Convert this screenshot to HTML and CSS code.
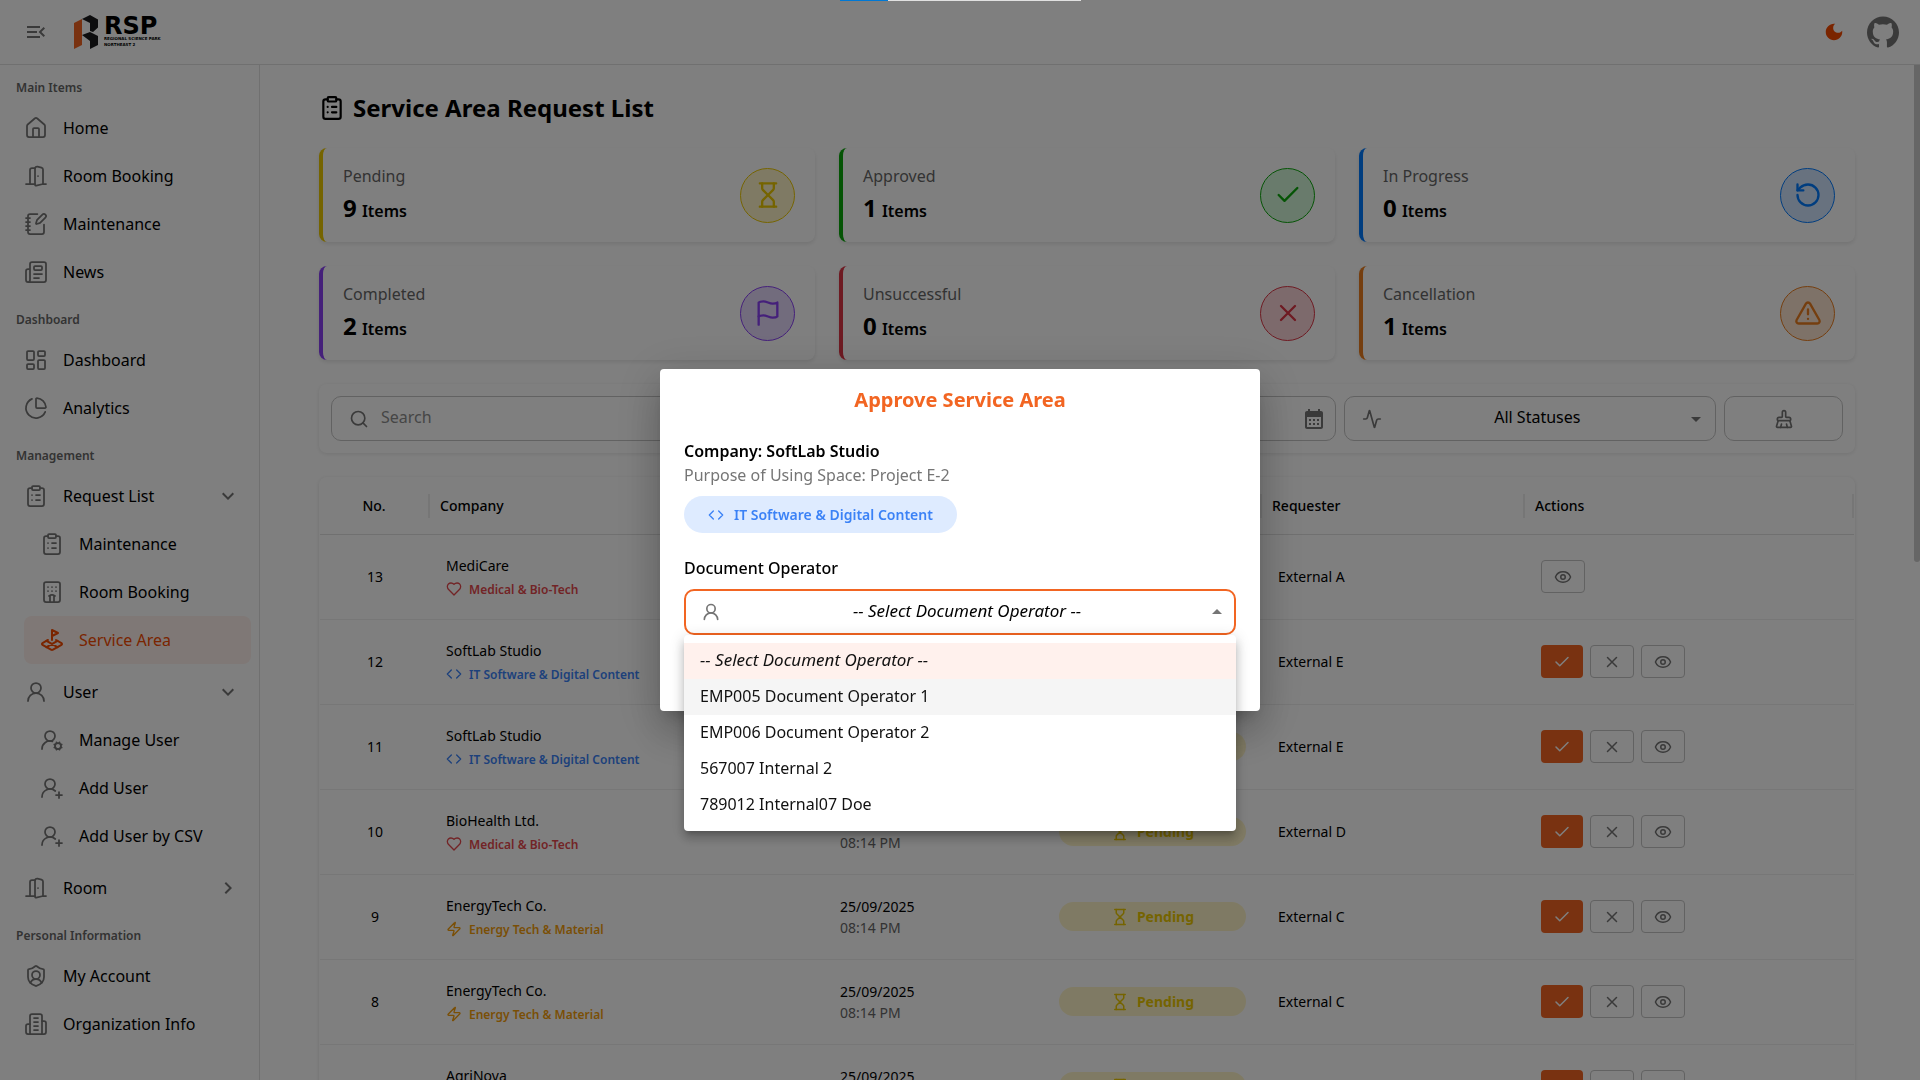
FILE: index.html
```html
<!DOCTYPE html>
<html lang="en">
<head>
<meta charset="utf-8">
<meta name="viewport" content="width=device-width, initial-scale=1">
<title>Service Area Request List</title>
<link rel="stylesheet" href="styles.css">
</head>
<body>
<svg class="sprite" aria-hidden="true">
  <symbol id="home" viewBox="0 0 24 24"><path d="M15 21v-8a1 1 0 0 0-1-1h-4a1 1 0 0 0-1 1v8"/><path d="M3 10a2 2 0 0 1 .709-1.528l7-6a2 2 0 0 1 2.582 0l7 6A2 2 0 0 1 21 10v9a2 2 0 0 1-2 2H5a2 2 0 0 1-2-2z"/></symbol>
  <symbol id="door" viewBox="0 0 24 24"><path d="M11 20H2"/><path d="M11 4.562v16.157a1 1 0 0 0 1.242.97L19 20V5.562a2 2 0 0 0-1.515-1.94l-4-1A2 2 0 0 0 11 4.561z"/><path d="M11 4H8a2 2 0 0 0-2 2v14"/><path d="M14 12h.01"/><path d="M22 20h-3"/></symbol>
  <symbol id="notebook" viewBox="0 0 24 24"><path d="M13.4 2H6a2 2 0 0 0-2 2v16a2 2 0 0 0 2 2h12a2 2 0 0 0 2-2v-7.4"/><path d="M2 6h4M2 10h4M2 14h4M2 18h4"/><path d="M21.378 5.626a1 1 0 1 0-3.004-3.004l-5.01 5.012a2 2 0 0 0-.506.854l-.837 2.87a.5.5 0 0 0 .62.62l2.87-.837a2 2 0 0 0 .854-.506z"/></symbol>
  <symbol id="news" viewBox="0 0 24 24"><path d="M15 18h-5M18 14h-8"/><path d="M4 22h16a2 2 0 0 0 2-2V4a2 2 0 0 0-2-2H8a2 2 0 0 0-2 2v16a2 2 0 0 1-4 0v-9a2 2 0 0 1 2-2h2"/><rect width="8" height="4" x="10" y="6" rx="1"/></symbol>
  <symbol id="dash" viewBox="0 0 24 24"><rect width="7" height="9" x="3" y="3" rx="1"/><rect width="7" height="5" x="14" y="3" rx="1"/><rect width="7" height="9" x="14" y="12" rx="1"/><rect width="7" height="5" x="3" y="16" rx="1"/></symbol>
  <symbol id="pie" viewBox="0 0 24 24"><path d="M21 12c.552 0 1.005-.449.95-.998a10 10 0 0 0-8.953-8.951c-.55-.055-.998.398-.998.95v8a1 1 0 0 0 1 1z"/><path d="M21.21 15.89A10 10 0 1 1 8 2.83"/></symbol>
  <symbol id="clip" viewBox="0 0 24 24"><rect width="8" height="4" x="8" y="2" rx="1"/><path d="M16 4h2a2 2 0 0 1 2 2v14a2 2 0 0 1-2 2H6a2 2 0 0 1-2-2V6a2 2 0 0 1 2-2h2"/><path d="M12 11h4M12 16h4M8 11h.01M8 16h.01"/></symbol>
  <symbol id="hotel" viewBox="0 0 24 24"><path d="M10 22v-6.57M12 11h.01M12 7h.01M14 15.43V22M15 16a5 5 0 0 0-6 0M16 11h.01M16 7h.01M8 11h.01M8 7h.01"/><rect x="4" y="2" width="16" height="20" rx="2"/></symbol>
  <symbol id="plot" viewBox="0 0 24 24"><path d="m12 8 6-3-6-3v10"/><path d="m8 11.99-5.5 3.14a1 1 0 0 0 0 1.74l8.5 4.86a2 2 0 0 0 2 0l8.5-4.86a1 1 0 0 0 0-1.74L16 12"/><path d="m6.49 12.85 11.02 6.3M17.51 12.85 6.5 19.15"/></symbol>
  <symbol id="user" viewBox="0 0 24 24"><circle cx="12" cy="8" r="5"/><path d="M20 21a8 8 0 0 0-16 0"/></symbol>
  <symbol id="usercog" viewBox="0 0 24 24"><path d="m14.305 19.53.923-.382M15.228 16.852l-.923-.383M16.852 15.228l-.383-.923M16.852 20.772l-.383.924M19.148 15.228l.383-.923M19.53 21.696l-.382-.924M20.772 16.852l.924-.383M20.772 19.148l.924.383"/><path d="M2 21a8 8 0 0 1 10.434-7.62"/><circle cx="10" cy="8" r="5"/><circle cx="18" cy="18" r="3"/></symbol>
  <symbol id="userplus" viewBox="0 0 24 24"><path d="M2 21a8 8 0 0 1 13.292-6"/><circle cx="10" cy="8" r="5"/><path d="M19 16v6M22 19h-6"/></symbol>
  <symbol id="shield" viewBox="0 0 24 24"><path d="M20 13c0 5-3.5 7.5-7.66 8.95a1 1 0 0 1-.67-.01C7.5 20.5 4 18 4 13V6a1 1 0 0 1 1-1c2 0 4.5-1.2 6.24-2.72a1.17 1.17 0 0 1 1.52 0C14.51 3.81 17 5 19 5a1 1 0 0 1 1 1z"/><path d="M6.376 18.91a6 6 0 0 1 11.249.003"/><circle cx="12" cy="11" r="4"/></symbol>
  <symbol id="org" viewBox="0 0 24 24"><path d="M6 22V4a2 2 0 0 1 2-2h8a2 2 0 0 1 2 2v18Z"/><path d="M6 12H4a2 2 0 0 0-2 2v6a2 2 0 0 0 2 2h2M18 9h2a2 2 0 0 1 2 2v9a2 2 0 0 1-2 2h-2M10 6h4M10 10h4M10 14h4M10 18h4"/></symbol>
  <symbol id="hourglass" viewBox="0 0 24 24"><path d="M5 22h14M5 2h14"/><path d="M17 22v-4.172a2 2 0 0 0-.586-1.414L12 12l-4.414 4.414A2 2 0 0 0 7 17.828V22"/><path d="M7 2v4.172a2 2 0 0 0 .586 1.414L12 12l4.414-4.414A2 2 0 0 0 17 6.172V2"/></symbol>
  <symbol id="check" viewBox="0 0 24 24"><path d="M20 6 9 17l-5-5"/></symbol>
  <symbol id="x" viewBox="0 0 24 24"><path d="M18 6 6 18M6 6l12 12"/></symbol>
  <symbol id="rotate" viewBox="0 0 24 24"><path d="M3 12a9 9 0 1 0 9-9 9.75 9.75 0 0 0-6.74 2.74L3 8"/><path d="M3 3v5h5"/></symbol>
  <symbol id="flag" viewBox="0 0 24 24"><path d="M4 15s1-1 4-1 5 2 8 2 4-1 4-1V3s-1 1-4 1-5-2-8-2-4 1-4 1z"/><path d="M4 22v-7"/></symbol>
  <symbol id="warn" viewBox="0 0 24 24"><path d="m21.73 18-8-14a2 2 0 0 0-3.48 0l-8 14A2 2 0 0 0 4 21h16a2 2 0 0 0 1.73-3"/><path d="M12 9v4M12 17h.01"/></symbol>
  <symbol id="search" viewBox="0 0 24 24"><circle cx="11" cy="11" r="8"/><path d="m21 21-4.3-4.3"/></symbol>
  <symbol id="activity" viewBox="0 0 24 24"><path d="M22 12h-2.48a2 2 0 0 0-1.93 1.46l-2.35 8.36a.25.25 0 0 1-.48 0L9.24 2.18a.25.25 0 0 0-.48 0l-2.35 8.36A2 2 0 0 1 4.49 12H2"/></symbol>
  <symbol id="broom" viewBox="0 0 24 24"><path d="m16 22-1-4"/><path d="M19 14a1 1 0 0 0 1-1v-1a2 2 0 0 0-2-2h-3a1 1 0 0 1-1-1V4a2 2 0 0 0-4 0v5a1 1 0 0 1-1 1H6a2 2 0 0 0-2 2v1a1 1 0 0 0 1 1"/><path d="M19 14H5l-1.973 6.767A1 1 0 0 0 4 22h16a1 1 0 0 0 .973-1.233z"/><path d="m8 22 1-4"/></symbol>
  <symbol id="heart" viewBox="0 0 24 24"><path d="M19 14c1.49-1.46 3-3.21 3-5.5A5.5 5.5 0 0 0 16.5 3c-1.76 0-3 .5-4.5 2-1.5-1.5-2.74-2-4.5-2A5.5 5.5 0 0 0 2 8.5c0 2.3 1.5 4.05 3 5.5l7 7Z"/></symbol>
  <symbol id="code" viewBox="0 0 24 24"><path d="m16 18 6-6-6-6M8 6l-6 6 6 6"/></symbol>
  <symbol id="zap" viewBox="0 0 24 24"><path d="M4 14a1 1 0 0 1-.78-1.63l9.9-10.2a.5.5 0 0 1 .86.46l-1.92 6.02A1 1 0 0 0 13 10h7a1 1 0 0 1 .78 1.63l-9.9 10.2a.5.5 0 0 1-.86-.46l1.92-6.02A1 1 0 0 0 11 14z"/></symbol>
  <symbol id="sprout" viewBox="0 0 24 24"><path d="M7 20h10M10 20c5.5-2.5.8-6.4 3-10"/><path d="M9.5 9.4c1.1.8 1.8 2.2 2.3 3.7-2 .4-3.5.4-4.8-.3-1.2-.6-2.3-1.9-3-4.2 2.8-.5 4.4 0 5.5.8z"/></symbol>
  <symbol id="eye" viewBox="0 0 24 24"><path d="M2.062 12.348a1 1 0 0 1 0-.696 10.75 10.75 0 0 1 19.876 0 1 1 0 0 1 0 .696 10.75 10.75 0 0 1-19.876 0"/><circle cx="12" cy="12" r="3"/></symbol>
  <symbol id="menu" viewBox="0 0 24 24"><path d="M3 18h13v-2H3v2zm0-5h10v-2H3v2zm0-7v2h13V6H3zm18 9.59L17.42 12 21 8.41 19.59 7l-5 5 5 5L21 15.59z"/></symbol>
  <symbol id="moon" viewBox="0 0 24 24"><path d="M12 3c-4.97 0-9 4.03-9 9s4.03 9 9 9 9-4.03 9-9c0-.46-.04-.92-.1-1.36-.98 1.37-2.58 2.26-4.4 2.26-2.98 0-5.4-2.42-5.4-5.4 0-1.81.89-3.42 2.26-4.4-.44-.06-.9-.1-1.36-.1z"/></symbol>
  <symbol id="github" viewBox="0 0 24 24"><path d="M12 .297c-6.63 0-12 5.373-12 12 0 5.303 3.438 9.8 8.205 11.385.6.113.82-.258.82-.577 0-.285-.01-1.04-.015-2.04-3.338.724-4.042-1.61-4.042-1.61C4.422 18.07 3.633 17.7 3.633 17.7c-1.087-.744.084-.729.084-.729 1.205.084 1.838 1.236 1.838 1.236 1.07 1.835 2.809 1.305 3.495.998.108-.776.417-1.305.76-1.605-2.665-.3-5.466-1.332-5.466-5.93 0-1.31.465-2.38 1.235-3.22-.135-.303-.54-1.523.105-3.176 0 0 1.005-.322 3.3 1.23.96-.267 1.98-.399 3-.405 1.02.006 2.04.138 3 .405 2.28-1.552 3.285-1.23 3.285-1.23.645 1.653.24 2.873.12 3.176.765.84 1.23 1.91 1.23 3.22 0 4.61-2.805 5.625-5.475 5.92.42.36.81 1.096.81 2.22 0 1.606-.015 2.896-.015 3.286 0 .315.21.69.825.57C20.565 22.092 24 17.592 24 12.297c0-6.627-5.373-12-12-12"/></symbol>
  <symbol id="down" viewBox="0 0 24 24"><path d="M16.59 8.59 12 13.17 7.41 8.59 6 10l6 6 6-6z"/></symbol>
  <symbol id="right" viewBox="0 0 24 24"><path d="M10 6 8.59 7.41 13.17 12l-4.58 4.59L10 18l6-6z"/></symbol>
  <symbol id="caret" viewBox="0 0 24 24"><path d="m7 10 5 5 5-5z"/></symbol>
  <symbol id="caretup" viewBox="0 0 24 24"><path d="m7 14 5-5 5 5z"/></symbol>
  <symbol id="calendar" viewBox="0 0 24 24"><path d="M19 4h-1V2h-2v2H8V2H6v2H5c-1.11 0-1.99.9-1.99 2L3 20c0 1.1.89 2 2 2h14c1.1 0 2-.9 2-2V6c0-1.1-.9-2-2-2zm0 16H5V10h14v10zM9 14H7v-2h2v2zm4 0h-2v-2h2v2zm4 0h-2v-2h2v2zm-8 4H7v-2h2v2zm4 0h-2v-2h2v2zm4 0h-2v-2h2v2z"/></symbol>
</svg>

<div class="app">
  <header class="topbar">
    <button class="icon-button" type="button" aria-label="Collapse menu"><svg class="solid s24"><use href="#menu"/></svg></button>
    <a class="logo" href="#" aria-label="RSP home">
      <svg class="logo-mark" viewBox="0 0 24 34"><path fill="#f26522" d="M0 8 8 4v26l-8 4z"/><path fill="#1a1a1c" d="m8 4 8-4 8 4.500v8L19 17l-3-1V8z"/><path fill="#1a1a1c" d="m8 20 8-3 8 4v9l-8 4v-8z"/></svg>
      <span class="logo-text"><span class="logo-name">RSP</span><span class="logo-sub">REGIONAL SCIENCE PARK</span><span class="logo-sub">NORTHEAST 2</span></span>
    </a>
    <div class="topbar-actions">
      <button class="icon-button moon" type="button" aria-label="Dark mode"><svg class="solid"><use href="#moon"/></svg></button>
      <a class="icon-button" href="#" aria-label="GitHub"><svg class="solid s32"><use href="#github"/></svg></a>
    </div>
  </header>

  <div class="layout">
    <nav class="sidebar" aria-label="Main">
      <h2 class="nav-title">Main Items</h2>
      <ul class="nav-list">
        <li><a class="nav-item" href="#"><svg class="line s24"><use href="#home"/></svg>Home</a></li>
        <li><a class="nav-item" href="#"><svg class="line s24"><use href="#door"/></svg>Room Booking</a></li>
        <li><a class="nav-item" href="#"><svg class="line s24"><use href="#notebook"/></svg>Maintenance</a></li>
        <li><a class="nav-item" href="#"><svg class="line s24"><use href="#news"/></svg>News</a></li>
      </ul>
      <h2 class="nav-title">Dashboard</h2>
      <ul class="nav-list">
        <li><a class="nav-item" href="#"><svg class="line s24"><use href="#dash"/></svg>Dashboard</a></li>
        <li><a class="nav-item" href="#"><svg class="line s24"><use href="#pie"/></svg>Analytics</a></li>
      </ul>
      <h2 class="nav-title">Management</h2>
      <ul class="nav-list">
        <li><a class="nav-item" href="#"><svg class="line s24"><use href="#clip"/></svg>Request List<svg class="solid s24 chevron"><use href="#down"/></svg></a>
          <ul class="nav-sub">
            <li><a class="nav-item" href="#"><svg class="line s24"><use href="#clip"/></svg>Maintenance</a></li>
            <li><a class="nav-item" href="#"><svg class="line s24"><use href="#hotel"/></svg>Room Booking</a></li>
            <li><a class="nav-item active" href="#"><svg class="line s24"><use href="#plot"/></svg>Service Area</a></li>
          </ul>
        </li>
        <li><a class="nav-item" href="#"><svg class="line s24"><use href="#user"/></svg>User<svg class="solid s24 chevron"><use href="#down"/></svg></a>
          <ul class="nav-sub">
            <li><a class="nav-item" href="#"><svg class="line s24"><use href="#usercog"/></svg>Manage User</a></li>
            <li><a class="nav-item" href="#"><svg class="line s24"><use href="#userplus"/></svg>Add User</a></li>
            <li><a class="nav-item" href="#"><svg class="line s24"><use href="#userplus"/></svg>Add User by CSV</a></li>
          </ul>
        </li>
        <li><a class="nav-item" href="#"><svg class="line s24"><use href="#door"/></svg>Room<svg class="solid s24 chevron"><use href="#right"/></svg></a></li>
      </ul>
      <h2 class="nav-title">Personal Information</h2>
      <ul class="nav-list">
        <li><a class="nav-item" href="#"><svg class="line s24"><use href="#shield"/></svg>My Account</a></li>
        <li><a class="nav-item" href="#"><svg class="line s24"><use href="#org"/></svg>Organization Info</a></li>
      </ul>
    </nav>

    <main class="main">
      <div class="container">
        <h1 class="page-title"><svg class="line s26"><use href="#clip"/></svg>Service Area Request List</h1>

        <section class="stats" aria-label="Summary">
          <article class="stat yellow"><div><p class="stat-label">Pending</p><p class="stat-value"><strong>9</strong> Items</p></div><span class="stat-icon"><svg class="line s28"><use href="#hourglass"/></svg></span></article>
          <article class="stat green"><div><p class="stat-label">Approved</p><p class="stat-value"><strong>1</strong> Items</p></div><span class="stat-icon"><svg class="line s28"><use href="#check"/></svg></span></article>
          <article class="stat blue"><div><p class="stat-label">In Progress</p><p class="stat-value"><strong>0</strong> Items</p></div><span class="stat-icon"><svg class="line s28"><use href="#rotate"/></svg></span></article>
          <article class="stat purple"><div><p class="stat-label">Completed</p><p class="stat-value"><strong>2</strong> Items</p></div><span class="stat-icon"><svg class="line s28"><use href="#flag"/></svg></span></article>
          <article class="stat red"><div><p class="stat-label">Unsuccessful</p><p class="stat-value"><strong>0</strong> Items</p></div><span class="stat-icon"><svg class="line s28"><use href="#x"/></svg></span></article>
          <article class="stat orange"><div><p class="stat-label">Cancellation</p><p class="stat-value"><strong>1</strong> Items</p></div><span class="stat-icon"><svg class="line s28"><use href="#warn"/></svg></span></article>
        </section>

        <form class="filters">
          <label class="field span5"><svg class="line s20"><use href="#search"/></svg><input type="text" placeholder="Search" aria-label="Search"></label>
          <label class="field date span3"><input type="text" aria-label="Date"><svg class="solid s24"><use href="#calendar"/></svg></label>
          <label class="field span3"><svg class="line s20"><use href="#activity"/></svg><select aria-label="Status"><option>All Statuses</option></select><svg class="solid s24 caret"><use href="#caret"/></svg></label>
          <button class="field clear" type="button" aria-label="Clear filters"><svg class="line s20"><use href="#broom"/></svg></button>
        </form>

        <section class="grid">
          <table>
            <colgroup><col class="c-no"><col class="c-company"><col class="c-date"><col class="c-status"><col class="c-requester"><col class="c-actions"></colgroup>
            <thead>
              <tr><th class="center"><div>No.</div></th><th><div>Company</div></th><th><div>Date</div></th><th><div>Status</div></th><th><div>Requester</div></th><th><div>Actions</div></th></tr>
            </thead>
            <tbody>
              <tr><td class="center">13</td><td class="company">MediCare<span class="tag medical"><svg class="line s16"><use href="#heart"/></svg>Medical &amp; Bio-Tech</span></td><td>25/09/2025<span class="time">08:14 PM</span></td><td></td><td>External A</td>
                <td><div class="actions"><button class="act" type="button" aria-label="View"><svg class="line s18"><use href="#eye"/></svg></button></div></td></tr>
              <tr><td class="center">12</td><td class="company">SoftLab Studio<span class="tag software"><svg class="line s16"><use href="#code"/></svg>IT Software &amp; Digital Content</span></td><td>25/09/2025<span class="time">08:14 PM</span></td><td><span class="pill"><svg class="line s18"><use href="#hourglass"/></svg>Pending</span></td><td>External E</td>
                <td><div class="actions"><button class="act approve" type="button" aria-label="Approve"><svg class="line s18"><use href="#check"/></svg></button><button class="act" type="button" aria-label="Reject"><svg class="line s18"><use href="#x"/></svg></button><button class="act" type="button" aria-label="View"><svg class="line s18"><use href="#eye"/></svg></button></div></td></tr>
              <tr><td class="center">11</td><td class="company">SoftLab Studio<span class="tag software"><svg class="line s16"><use href="#code"/></svg>IT Software &amp; Digital Content</span></td><td>25/09/2025<span class="time">08:14 PM</span></td><td><span class="pill"><svg class="line s18"><use href="#hourglass"/></svg>Pending</span></td><td>External E</td>
                <td><div class="actions"><button class="act approve" type="button" aria-label="Approve"><svg class="line s18"><use href="#check"/></svg></button><button class="act" type="button" aria-label="Reject"><svg class="line s18"><use href="#x"/></svg></button><button class="act" type="button" aria-label="View"><svg class="line s18"><use href="#eye"/></svg></button></div></td></tr>
              <tr><td class="center">10</td><td class="company">BioHealth Ltd.<span class="tag medical"><svg class="line s16"><use href="#heart"/></svg>Medical &amp; Bio-Tech</span></td><td>25/09/2025<span class="time">08:14 PM</span></td><td><span class="pill"><svg class="line s18"><use href="#hourglass"/></svg>Pending</span></td><td>External D</td>
                <td><div class="actions"><button class="act approve" type="button" aria-label="Approve"><svg class="line s18"><use href="#check"/></svg></button><button class="act" type="button" aria-label="Reject"><svg class="line s18"><use href="#x"/></svg></button><button class="act" type="button" aria-label="View"><svg class="line s18"><use href="#eye"/></svg></button></div></td></tr>
              <tr><td class="center">9</td><td class="company">EnergyTech Co.<span class="tag energy"><svg class="line s16"><use href="#zap"/></svg>Energy Tech &amp; Material</span></td><td>25/09/2025<span class="time">08:14 PM</span></td><td><span class="pill"><svg class="line s18"><use href="#hourglass"/></svg>Pending</span></td><td>External C</td>
                <td><div class="actions"><button class="act approve" type="button" aria-label="Approve"><svg class="line s18"><use href="#check"/></svg></button><button class="act" type="button" aria-label="Reject"><svg class="line s18"><use href="#x"/></svg></button><button class="act" type="button" aria-label="View"><svg class="line s18"><use href="#eye"/></svg></button></div></td></tr>
              <tr><td class="center">8</td><td class="company">EnergyTech Co.<span class="tag energy"><svg class="line s16"><use href="#zap"/></svg>Energy Tech &amp; Material</span></td><td>25/09/2025<span class="time">08:14 PM</span></td><td><span class="pill"><svg class="line s18"><use href="#hourglass"/></svg>Pending</span></td><td>External C</td>
                <td><div class="actions"><button class="act approve" type="button" aria-label="Approve"><svg class="line s18"><use href="#check"/></svg></button><button class="act" type="button" aria-label="Reject"><svg class="line s18"><use href="#x"/></svg></button><button class="act" type="button" aria-label="View"><svg class="line s18"><use href="#eye"/></svg></button></div></td></tr>
              <tr><td class="center">7</td><td class="company">AgriNova<span class="tag agri"><svg class="line s16"><use href="#sprout"/></svg>Agriculture</span></td><td>25/09/2025<span class="time">08:14 PM</span></td><td><span class="pill"><svg class="line s18"><use href="#hourglass"/></svg>Pending</span></td><td>External B</td>
                <td><div class="actions"><button class="act approve" type="button" aria-label="Approve"><svg class="line s18"><use href="#check"/></svg></button><button class="act" type="button" aria-label="Reject"><svg class="line s18"><use href="#x"/></svg></button><button class="act" type="button" aria-label="View"><svg class="line s18"><use href="#eye"/></svg></button></div></td></tr>
            </tbody>
          </table>
        </section>
      </div>
    </main>
    <div class="scroll-track" aria-hidden="true"><div class="scroll-thumb"></div></div>
  </div>
</div>

<div class="backdrop">
  <div class="dialog" role="dialog" aria-modal="true" aria-labelledby="dialog-title">
    <h2 class="dialog-title" id="dialog-title">Approve Service Area</h2>
    <p class="dialog-company">Company: SoftLab Studio</p>
    <p class="dialog-purpose">Purpose of Using Space: Project E-2</p>
    <span class="chip"><svg class="line s16"><use href="#code"/></svg>IT Software &amp; Digital Content</span>
    <label class="dialog-label" for="operator">Document Operator</label>
    <div class="operator">
      <div class="field focused"><svg class="line s20"><use href="#user"/></svg><select id="operator"><option>-- Select Document Operator --</option></select><svg class="solid s24 caret"><use href="#caretup"/></svg></div>
      <ul class="menu" role="listbox" aria-label="Document Operator">
        <li class="selected" role="option" aria-selected="true">-- Select Document Operator --</li>
        <li class="hover" role="option">EMP005 Document Operator 1</li>
        <li role="option">EMP006 Document Operator 2</li>
        <li role="option">567007 Internal 2</li>
        <li role="option">789012 Internal07 Doe</li>
      </ul>
    </div>
  </div>
</div>
<div class="loader" aria-hidden="true"><div class="loader-track"><div class="loader-bar"></div></div></div>
</body>
</html>
```
FILE: styles.css
```css
:root {
  --accent: #f26522;
  --accent-strong: #f54a00;
  --text: #000;
  --muted: #666;
  --icon: #757575;
  --line: #e0e0e0;
}

* { box-sizing: border-box; }

body {
  margin: 0;
  font: 16px/24px "Noto Sans", sans-serif;
  color: var(--text);
  background: #fff;
  overflow: hidden;
}

h1, h2, p, ul { margin: 0; padding: 0; }
ul { list-style: none; }
a { color: inherit; text-decoration: none; }
button, input, select { font: inherit; color: inherit; }

.sprite { display: none; }
svg { flex: none; width: 22px; height: 22px; }
.line { fill: none; stroke: currentColor; stroke-width: 2; stroke-linecap: round; stroke-linejoin: round; }
.solid { fill: currentColor; }
.s16 { width: 16px; height: 16px; }
.s18 { width: 18px; height: 18px; }
.s20 { width: 20px; height: 20px; }
.s24 { width: 24px; height: 24px; }
.s26 { width: 26px; height: 26px; }
.s28 { width: 28px; height: 28px; }
.s32 { width: 32px; height: 32px; }

/* Shell */
.app { display: flex; flex-direction: column; height: 100vh; }

.topbar {
  display: flex;
  align-items: center;
  flex: none;
  height: 65px;
  padding: 0 21px 0 24px;
  border-bottom: 1px solid var(--line);
}

.icon-button {
  display: flex;
  padding: 0;
  border: 0;
  background: none;
  color: var(--icon);
}

.moon { color: var(--accent-strong); }
.topbar-actions { display: flex; align-items: center; gap: 22px; margin-left: auto; }

.logo { display: flex; align-items: center; gap: 6px; margin-left: 26px; }
.logo-mark { width: 24px; height: 34px; }
.logo-text { display: flex; flex-direction: column; font-family: "DejaVu Sans", sans-serif; font-weight: 700; }
.logo-name { font-size: 24px; line-height: 20px; }
.logo-sub { font-size: 4px; line-height: 6px; }

.layout { display: flex; flex: 1; min-height: 0; }

/* Sidebar */
.sidebar {
  flex: none;
  width: 260px;
  padding: 0 8px;
  border-right: 1px solid var(--line);
  overflow: hidden;
}

.nav-title {
  padding: 8px 8px 0;
  color: var(--muted);
  font-size: 12px;
  font-weight: 600;
  line-height: 32px;
}
.nav-title:first-child { padding-top: 7px; }

.nav-sub { margin: 0 0 4px 16px; }

.nav-item {
  display: flex;
  align-items: center;
  gap: 15px;
  height: 48px;
  padding: 0 11px 1px 16px;
  border-radius: 8px;
}

.nav-item svg { color: var(--icon); stroke-width: 1.75; }
.nav-item .chevron { margin-left: auto; }
.nav-item.active { background: #fef0ec; color: var(--accent-strong); }
.nav-item.active svg { color: inherit; stroke-width: 2; }

/* Main column */
.main { flex: 1; min-width: 0; overflow: hidden; }
.container { max-width: 1536px; margin: 0 auto; padding-top: 24px; }

.page-title {
  display: flex;
  align-items: center;
  gap: 8px;
  margin-bottom: 22px;
  font-size: 24px;
  font-weight: 700;
  line-height: 37px;
}

.stats { display: grid; grid-template-columns: repeat(3, 1fr); gap: 24px; }

.stat {
  display: flex;
  align-items: center;
  justify-content: space-between;
  height: 94px;
  padding: 0 20px;
  border-left: 4px solid var(--tone);
  border-radius: 8px;
  box-shadow: 0 2px 4px rgba(0, 0, 0, 0.1);
}

.stat-label { color: var(--muted); }
.stat-value { margin-top: 4px; font-weight: 600; line-height: 31px; }
.stat-value strong { margin-right: 1px; font-size: 24px; font-weight: 700; }

.stat-icon {
  display: grid;
  place-items: center;
  width: 55px;
  height: 55px;
  border: 1px solid var(--tone);
  border-radius: 50%;
  background: var(--tint);
  color: var(--tone);
}

.yellow { --tone: #ebc800; --tint: #fff5c8; }
.green { --tone: #0aa80a; --tint: #d2f7d8; }
.blue { --tone: #007aff; --tint: #d0e4ff; }
.purple { --tone: #8a40f5; --tint: #e4d8fb; }
.red { --tone: #dc3545; --tint: #fbd5d9; }
.orange { --tone: #ea7d1e; --tint: #fde5d0; }

.filters {
  display: grid;
  grid-template-columns: repeat(12, 1fr);
  gap: 8px;
  margin-top: 24px;
  padding: 12px;
  border-radius: 8px;
  box-shadow: 0 1px 4px rgba(0, 0, 0, 0.1);
}
.span5 { grid-column: span 5; }
.span3 { grid-column: span 3; }

.field {
  display: flex;
  align-items: center;
  height: 45px;
  padding: 0 7px 0 17px;
  border: 1px solid #c4c4c4;
  border-radius: 10px;
  background: #fff;
}
.field svg { color: var(--icon); }
.field input {
  flex: 1;
  min-width: 0;
  margin-left: 12px;
  padding: 0 0 3px;
  border: 0;
  outline: 0;
  background: none;
}
.field input::placeholder { color: #8c8c8c; opacity: 1; }
.field.date { padding-right: 9px; }
.field select {
  flex: 1;
  min-width: 0;
  margin-left: 8px;
  padding: 0 0 3px;
  border: 0;
  outline: 0;
  background: none;
  appearance: none;
  text-align: center;
  text-align-last: center;
}
.field.clear { justify-content: center; padding: 0; }

/* Request table */
.grid { margin-top: 24px; padding: 1px; border-radius: 8px; box-shadow: 0 1px 4px rgba(0, 0, 0, 0.12); }
table { width: 100%; border-collapse: collapse; table-layout: fixed; font-size: 14px; line-height: 21px; }
.c-no { width: 110px; }
.c-company { width: 394px; }
.c-date, .c-status { width: 219px; }
.c-requester { width: 263px; }
.c-actions { width: 329px; }

th { height: 56px; padding: 0; border-bottom: 1px solid var(--line); font-weight: 500; text-align: left; }
th div { padding: 0 10px; border-right: 2px solid #ececec; line-height: 24px; }
td { height: 85px; padding: 0 16px; border-bottom: 1px solid #eee; }
td.company { line-height: 25px; }
.center { text-align: center; }

.tag { display: flex; align-items: center; gap: 7px; font-size: 12px; font-weight: 600; line-height: 23px; }
.medical { color: #e5484d; }
.software { color: #3b82f6; }
.energy { color: #f59e0b; }
.agri { color: #22a55a; }
.time { display: block; color: var(--muted); }

.pill {
  display: flex;
  align-items: center;
  justify-content: center;
  gap: 8px;
  height: 29px;
  border-radius: 16px;
  background: #fff5c8;
  color: #ebc800;
  font-weight: 700;
}

.actions { display: flex; gap: 7px; }
.act {
  display: grid;
  place-items: center;
  width: 44px;
  height: 33px;
  padding: 0;
  border: 1px solid #c4c4c4;
  border-radius: 4px;
  background: none;
  color: var(--icon);
}
.act.approve { width: 42px; border: 0; background: var(--accent); color: #fff; }

.scroll-track { flex: none; width: 6px; }
.scroll-thumb { height: 49%; border-radius: 0 0 4px 4px; background: #ccc; }

/* Dialog */
.backdrop {
  position: fixed;
  inset: 0;
  display: flex;
  align-items: center;
  justify-content: center;
  background: rgba(0, 0, 0, 0.5);
}

.dialog {
  width: 600px;
  padding: 15px 24px 76px;
  border-radius: 4px;
  background: #fff;
  box-shadow: 0 11px 15px -7px rgba(0, 0, 0, 0.2), 0 24px 38px 3px rgba(0, 0, 0, 0.14), 0 9px 46px 8px rgba(0, 0, 0, 0.12);
}

.dialog-title {
  margin-bottom: 24px;
  color: var(--accent);
  font-size: 20px;
  font-weight: 700;
  line-height: 31px;
  text-align: center;
}
.dialog-company { font-weight: 600; }
.dialog-purpose { margin-bottom: 9px; color: var(--icon); }

.chip {
  display: flex;
  align-items: center;
  gap: 10px;
  width: fit-content;
  height: 37px;
  padding: 0 24px;
  border-radius: 20px;
  background: #deebff;
  color: #3b82f6;
  font-size: 14px;
  font-weight: 600;
}

.dialog-label { display: block; margin: 23px 0 9px; font-weight: 500; }
.operator { position: relative; }
.field.focused { height: 46px; padding: 0 5px 0 15px; border: 2px solid var(--accent); font-size: 17px; font-style: italic; }

.menu {
  position: absolute;
  top: 100%;
  left: 0;
  right: 0;
  padding: 8px 0;
  border-radius: 4px;
  background: #fff;
  box-shadow: 0 5px 5px -3px rgba(0, 0, 0, 0.2), 0 8px 10px 1px rgba(0, 0, 0, 0.14), 0 3px 14px 2px rgba(0, 0, 0, 0.12);
}
.menu li { padding: 5px 16px 7px; color: #111; }
.menu .selected { background: #fff1ed; font-size: 17px; font-style: italic; }
.menu .hover { background: #f5f5f5; }

/* Page loading indicator */
.loader { position: fixed; inset: 0 0 auto; display: flex; justify-content: center; }
.loader-track { width: 241px; height: 1px; background: #e0e0e0; }
.loader-bar { width: 20%; height: 1px; background: #0078d4; }
```
